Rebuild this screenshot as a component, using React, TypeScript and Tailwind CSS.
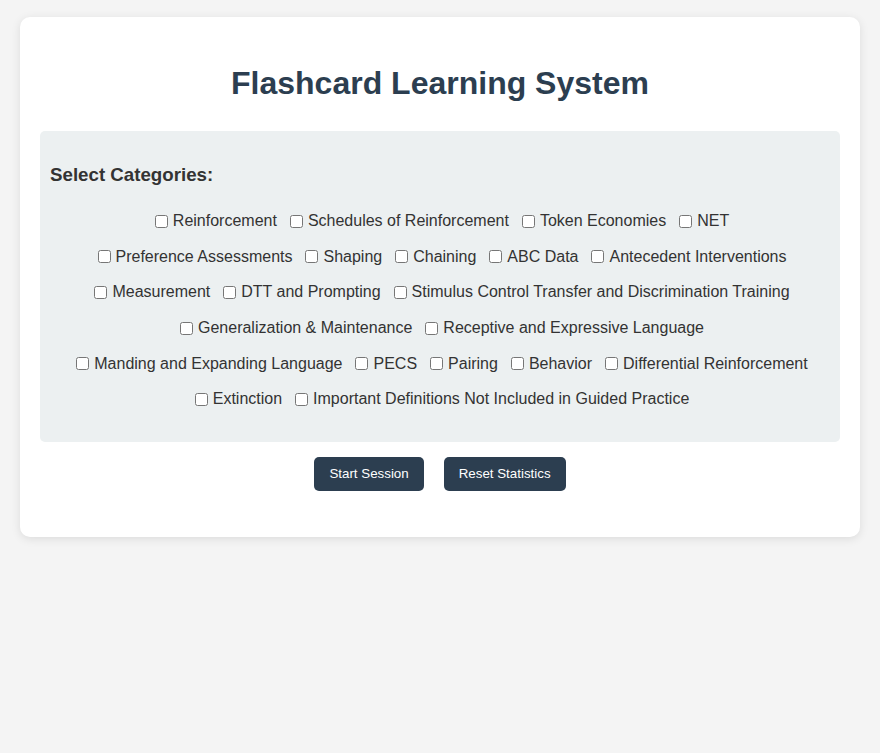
import React, { useState } from "react";

const categories = [
  "Reinforcement",
  "Schedules of Reinforcement",
  "Token Economies",
  "NET",
  "Preference Assessments",
  "Shaping",
  "Chaining",
  "ABC Data",
  "Antecedent Interventions",
  "Measurement",
  "DTT and Prompting",
  "Stimulus Control Transfer and Discrimination Training",
  "Generalization & Maintenance",
  "Receptive and Expressive Language",
  "Manding and Expanding Language",
  "PECS",
  "Pairing",
  "Behavior",
  "Differential Reinforcement",
  "Extinction",
  "Important Definitions Not Included in Guided Practice",
];

export default function App() {
  const [selected, setSelected] = useState<string[]>([]);

  const toggle = (name: string) => {
    setSelected((prev) =>
      prev.includes(name) ? prev.filter((c) => c !== name) : [...prev, name]
    );
  };

  return (
    <div
      className="min-h-[753px] bg-[#f4f4f4] pt-[17px] px-[20px]"
      style={{ fontFamily: '"Liberation Sans", Arial, sans-serif' }}
    >
      <div className="bg-white rounded-[10px] shadow-[0_2px_10px_rgba(0,0,0,0.1)] px-[20px] pt-[48px] pb-[46px]">
        <h1 className="text-center text-[32px] font-bold text-[#2c3e50] leading-[37px] mb-[29px]">
          Flashcard Learning System
        </h1>

        {/* Category selection */}
        <div className="bg-[#ecf0f1] rounded-[5px] px-[10px] pt-[15px] pb-[34px]">
          <h3 className="text-[18.72px] font-bold text-[#333] leading-[21.5px] mt-[17.72px] mb-[27px]">
            Select Categories:
          </h3>
          <div className="flex flex-wrap justify-center gap-x-[13px] gap-y-[17.6px] pl-[4px]">
            {categories.map((cat) => (
              <label
                key={cat}
                className="flex items-center text-[16px] leading-[18px] text-[#333] cursor-pointer"
              >
                <input
                  type="checkbox"
                  className="w-[13px] h-[13px] mr-[5px]"
                  checked={selected.includes(cat)}
                  onChange={() => toggle(cat)}
                />
                {cat}
              </label>
            ))}
          </div>
        </div>

        {/* Actions */}
        <div className="flex justify-center gap-[20px] mt-[15px]">
          <button className="h-[34px] px-[15px] bg-[#2c3e50] text-white text-[13.33px] rounded-[5px]">
            Start Session
          </button>
          <button className="h-[34px] px-[15px] bg-[#2c3e50] text-white text-[13.33px] rounded-[5px]">
            Reset Statistics
          </button>
        </div>
      </div>
    </div>
  );
}
